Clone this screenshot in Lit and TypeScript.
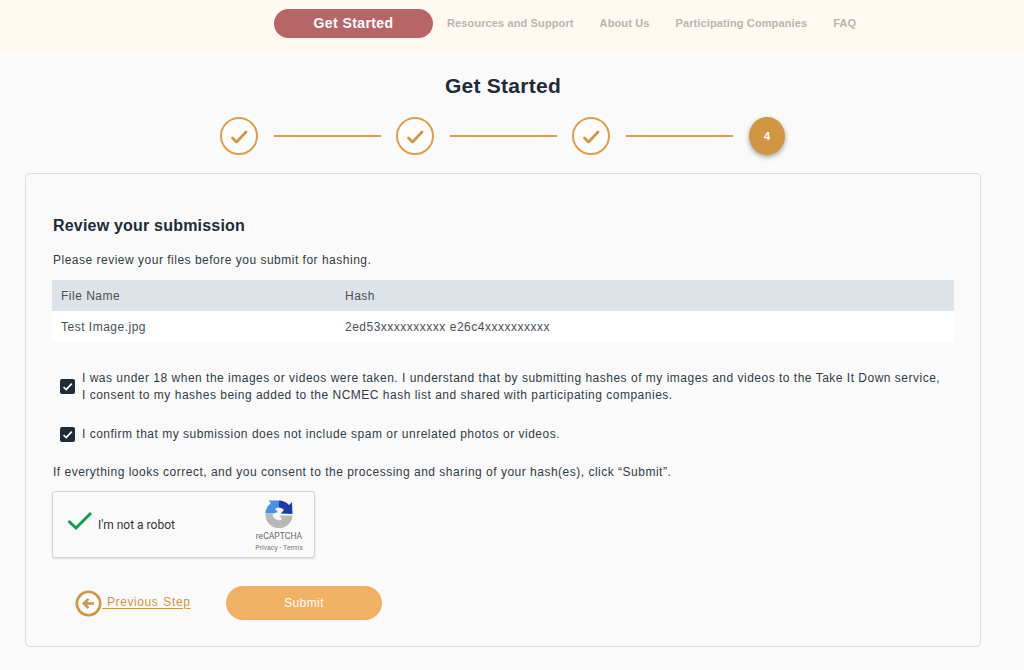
import { LitElement, html, css, svg } from "lit";
import { customElement } from "lit/decorators.js";

const check = svg`<path d="M6.5 15 L10.5 19 L20 9" fill="none" stroke="#d09642" stroke-width="2.8" stroke-linecap="round" stroke-linejoin="round"/>`;
const boxTick = svg`<path d="M3.5 8 L6.2 10.6 L11.8 4.6" fill="none" stroke="#fff" stroke-width="1.7"/>`;

@customElement("app-root")
export class AppRoot extends LitElement {
  static styles = css`
    :host { display: block; min-height: 670px; background: #fafafa; color: #212b36; font-family: "Liberation Sans", Arial, sans-serif; overflow: hidden; }
    * { box-sizing: border-box; }
    .nav { height: 54px; background: #fff9f2; display: flex; align-items: flex-start; padding: 9px 0 0 274px; }
    .pill { width: 159px; height: 29px; padding-bottom: 2px; border-radius: 15px; background: #b86567; color: #fff; font-size: 14px; font-weight: 700; letter-spacing: .4px; display: flex; align-items: center; justify-content: center; }
    .links { display: flex; gap: 26px; margin-left: 14px; height: 27px; align-items: center; font-size: 11px; font-weight: 700; letter-spacing: .12px; color: #b9b5ae; }
    h1 { margin: 21px 0 0; height: 22px; line-height: 22px; padding-right: 18px; text-align: center; font-size: 21px; font-weight: 700; letter-spacing: .25px; color: #212b36; }
    .steps { display: flex; align-items: center; margin: 20px 0 0 220px; height: 38px; }
    .step { width: 38px; height: 38px; flex: none; border-radius: 50%; border: 2px solid #d8a050; background: #fff; display: flex; align-items: center; justify-content: center; }
    .step svg { width: 26px; height: 26px; }
    .line { flex: none; width: 107px; height: 2px; margin: 0 15.5px; background: #d8a050; }
    .step.cur { width: 36px; height: 38px; margin-left: 1px; border: 0; background: #d09642; color: #fff; font-size: 11px; font-weight: 700; box-shadow: 0 2px 5px rgba(0,0,0,.35); }
    .card { margin: 18px 0 0 25px; width: 956px; height: 474px; border: 1px solid #d7dde2; border-radius: 5px; background: #fafafa; padding: 42px 26px 0; }
    h2 { margin: 0; font-size: 16px; line-height: 20px; font-weight: 700; letter-spacing: .2px; color: #212b36; padding-left: 1px; }
    p { margin: 0; font-size: 12px; line-height: 20px; letter-spacing: .5px; color: #333b44; }
    .intro { margin-top: 14px; padding-left: 1px; }
    .table { margin-top: 10px; font-size: 12px; letter-spacing: .5px; color: #4a4f55; }
    .row { display: grid; grid-template-columns: 284px 1fr; height: 31px; align-items: center; padding-left: 9px; background: #fff; }
    .row.head { background: #dee2e9; }
    .consent { display: flex; align-items: center; gap: 7px; padding-left: 8px; }
    .consent.one { margin-top: 28px; }
    .consent.one .box { margin-top: -2px; }
    .consent.two { margin-top: 22px; }
    .box { width: 15px; height: 15px; flex: none; border-radius: 2px; background: #212b36; display: flex; align-items: center; justify-content: center; }
    .box svg { width: 15px; height: 15px; }
    .consent p { line-height: 17px; }
    .final { margin-top: 19px; padding-left: 1px; }
    .captcha { margin-top: 9px; width: 263px; height: 67px; background: #fafafa; border: 1px solid #d3d3d3; border-radius: 3px; box-shadow: 0 1px 2px rgba(0,0,0,.12); display: flex; align-items: center; padding-left: 14px; font-family: Roboto, "Liberation Sans", sans-serif; }
    .tick { width: 26px; height: 20px; flex: none; margin-bottom: 8px; }
    .robot { margin-left: 5px; font-size: 12px; color: #333; }
    .brand { margin-left: auto; margin-right: 10px; padding-top: 3px; width: 50px; display: flex; flex-direction: column; align-items: center; }
    .brand svg { width: 28px; height: 28px; }
    .rc { font-size: 8.6px; line-height: 10px; margin-top: 3px; color: #6b6b6b; }
    .terms { font-size: 7px; line-height: 10px; margin-top: 2px; color: #777; }
    .actions { display: flex; align-items: center; margin-top: 28px; padding-left: 23px; }
    .prev { display: flex; align-items: center; color: #d09642; font-size: 12px; letter-spacing: .6px; text-decoration: underline; text-underline-offset: 2px; width: 151px; }
    .prev svg { width: 27px; height: 27px; flex: none; }
    .prev span { margin-top: -3px; white-space: pre; word-spacing: 1px; }
    .submit { width: 156px; height: 34px; border-radius: 17px; background: #efb164; color: #fff; font-size: 12px; letter-spacing: .4px; display: flex; align-items: center; justify-content: center; }
  `;

  render() {
    const done = html`<div class="step"><svg viewBox="0 0 26 26">${check}</svg></div>`;
    const line = html`<div class="line"></div>`;
    return html`
      <div class="nav">
        <div class="pill">Get Started</div>
        <div class="links">
          <span>Resources and Support</span><span>About Us</span><span>Participating Companies</span><span>FAQ</span>
        </div>
      </div>
      <h1>Get Started</h1>
      <div class="steps">${done}${line}${done}${line}${done}${line}<div class="step cur">4</div></div>
      <div class="card">
        <h2>Review your submission</h2>
        <p class="intro">Please review your files before you submit for hashing.</p>
        <div class="table">
          <div class="row head"><span>File Name</span><span>Hash</span></div>
          <div class="row"><span>Test Image.jpg</span><span>2ed53xxxxxxxxxx e26c4xxxxxxxxxx</span></div>
        </div>
        <div class="consent one">
          <div class="box"><svg viewBox="0 0 15 15">${boxTick}</svg></div>
          <p>I was under 18 when the images or videos were taken. I understand that by submitting hashes of my images and videos to the Take It Down service,<br>I consent to my hashes being added to the NCMEC hash list and shared with participating companies.</p>
        </div>
        <div class="consent two">
          <div class="box"><svg viewBox="0 0 15 15">${boxTick}</svg></div>
          <p>I confirm that my submission does not include spam or unrelated photos or videos.</p>
        </div>
        <p class="final">If everything looks correct, and you consent to the processing and sharing of your hash(es), click “Submit”.</p>
        <div class="captcha">
          <svg class="tick" viewBox="0 0 26 20"><path d="M1.5 10 L9 17 L24 2" fill="none" stroke="#0f9d58" stroke-width="3"/></svg>
          <span class="robot">I'm not a robot</span>
          <div class="brand">
            <svg viewBox="0 0 28 28">
              <path d="M0.5 13.5 A13.5 13.5 0 0 1 6 3 L3.5 0.5 L14 0.5 L14 7.5 A6.5 6.5 0 0 0 10 9 L13 12 L8 13.5 Z" fill="#4a90e2"/>
              <path d="M14 0.5 A13.5 13.5 0 0 1 24 5 L27 2 L27.5 14 L15.5 13.5 L19 10 A6.5 6.5 0 0 0 14 7.5 Z" fill="#1c3aa9"/>
              <path d="M0.5 14 L7.5 14 A6.5 6.5 0 0 0 17 19.5 L14.5 15.5 L27.5 15.5 A13.5 13.5 0 0 1 0.5 14 Z" fill="#b8b8b8"/>
            </svg>
            <div class="rc">reCAPTCHA</div>
            <div class="terms">Privacy - Terms</div>
          </div>
        </div>
        <div class="actions">
          <div class="prev">
            <svg viewBox="0 0 27 27"><circle cx="13.5" cy="13.5" r="11.7" fill="#fff" stroke="#d09642" stroke-width="2.6"/><path d="M19 13.5 H9 M13.5 8.8 L8.8 13.5 L13.5 18.2" fill="none" stroke="#d09642" stroke-width="2.6"/></svg>
            <span> Previous Step</span>
          </div>
          <div class="submit">Submit</div>
        </div>
      </div>
    `;
  }
}
